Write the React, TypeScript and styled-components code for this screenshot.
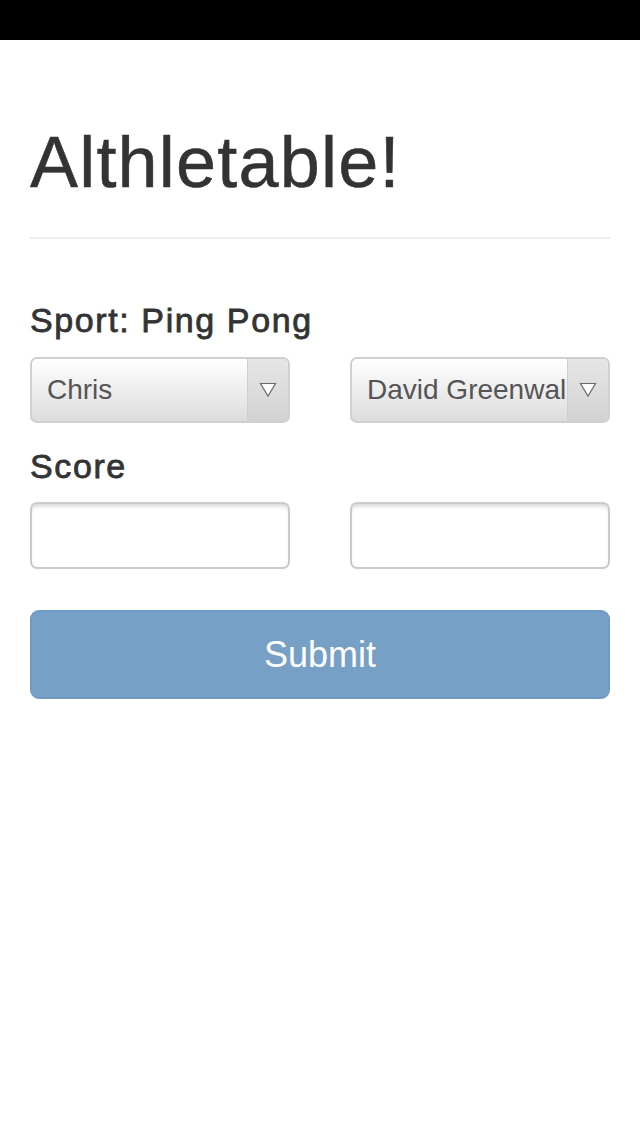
import React from "react"
import styled, { createGlobalStyle } from "styled-components"

const GlobalStyle = createGlobalStyle`
    body {
        margin: 0;
        background: #fff;
        font-family: "Liberation Sans", Arial, sans-serif;
        color: #333;
    }
`

const StatusBar = styled.div`
    height: 40px;
    background: #000;
`

const Page = styled.main`
    padding: 82px 30px 0;
`

const Title = styled.h1`
    margin: 0;
    font-size: 72px;
    line-height: 80px;
    font-weight: 400;
    letter-spacing: 1.2px;
    color: #333;
    -webkit-text-stroke: 0.5px #333;
`

const Rule = styled.hr`
    margin: 35px 0 0;
    border: 0;
    border-top: 2px solid #eee;
`

const Label = styled.div<{ $gap: number }>`
    margin-top: ${(p) => p.$gap}px;
    font-size: 34px;
    line-height: 40px;
    letter-spacing: 1.6px;
    color: #333;
    -webkit-text-stroke: 0.8px #333;
`

const Pair = styled.div<{ $gap: number }>`
    margin-top: ${(p) => p.$gap}px;
    display: grid;
    grid-template-columns: 260px 260px;
    justify-content: space-between;
`

const Select = styled.div`
    display: flex;
    height: 66px;
    box-sizing: border-box;
    border: 2px solid #d0d0d0;
    border-radius: 7px;
    overflow: hidden;
    background: linear-gradient(#ffffff, #dcdcdc);
`

const SelectValue = styled.div`
    flex: 1;
    min-width: 0;
    padding-left: 15px;
    display: flex;
    align-items: center;
    font-size: 28px;
    color: #555;
    white-space: nowrap;
    overflow: hidden;
`

const ArrowZone = styled.div`
    width: 40px;
    flex: none;
    display: flex;
    align-items: center;
    justify-content: center;
    border-left: 1px solid #cfcfcf;
    background: linear-gradient(#e6e6e6, #d2d2d2);
`

const Input = styled.input`
    display: block;
    width: 100%;
    height: 67px;
    box-sizing: border-box;
    border: 2px solid #cbcbcb;
    border-radius: 7px;
    background: #fff;
    box-shadow: inset 0 4px 4px -2px rgba(0, 0, 0, 0.18);
    font: inherit;
    outline: none;
`

const Submit = styled.button`
    display: block;
    width: 100%;
    height: 89px;
    margin-top: 41px;
    border: 2px solid #6f9ac4;
    border-radius: 9px;
    background: #77a0c6;
    color: #fff;
    font-family: "Liberation Sans", Arial, sans-serif;
    font-size: 36px;
    padding: 0;
`

const Arrow = () => (
    <svg width="18" height="16" viewBox="0 0 18 16">
        <path d="M1.5 1.5 L16.5 1.5 L9 14 Z" fill="#fff" stroke="#6a6a6a" strokeWidth="1.2" strokeLinejoin="miter" />
    </svg>
)

const PlayerSelect: React.FC<{ name: string }> = ({ name }) => (
    <Select>
        <SelectValue>{name}</SelectValue>
        <ArrowZone>
            <Arrow />
        </ArrowZone>
    </Select>
)

const App: React.FC = () => {
    return (
        <>
            <GlobalStyle />
            <StatusBar />
            <Page>
                <Title>Althletable!</Title>
                <Rule />
                <Label $gap={61}>Sport: Ping Pong</Label>
                <Pair $gap={17}>
                    <PlayerSelect name="Chris" />
                    <PlayerSelect name="David Greenwald" />
                </Pair>
                <Label $gap={23}>Score</Label>
                <Pair $gap={16}>
                    <Input type="text" />
                    <Input type="text" />
                </Pair>
                <Submit>Submit</Submit>
            </Page>
        </>
    )
}

export default App
